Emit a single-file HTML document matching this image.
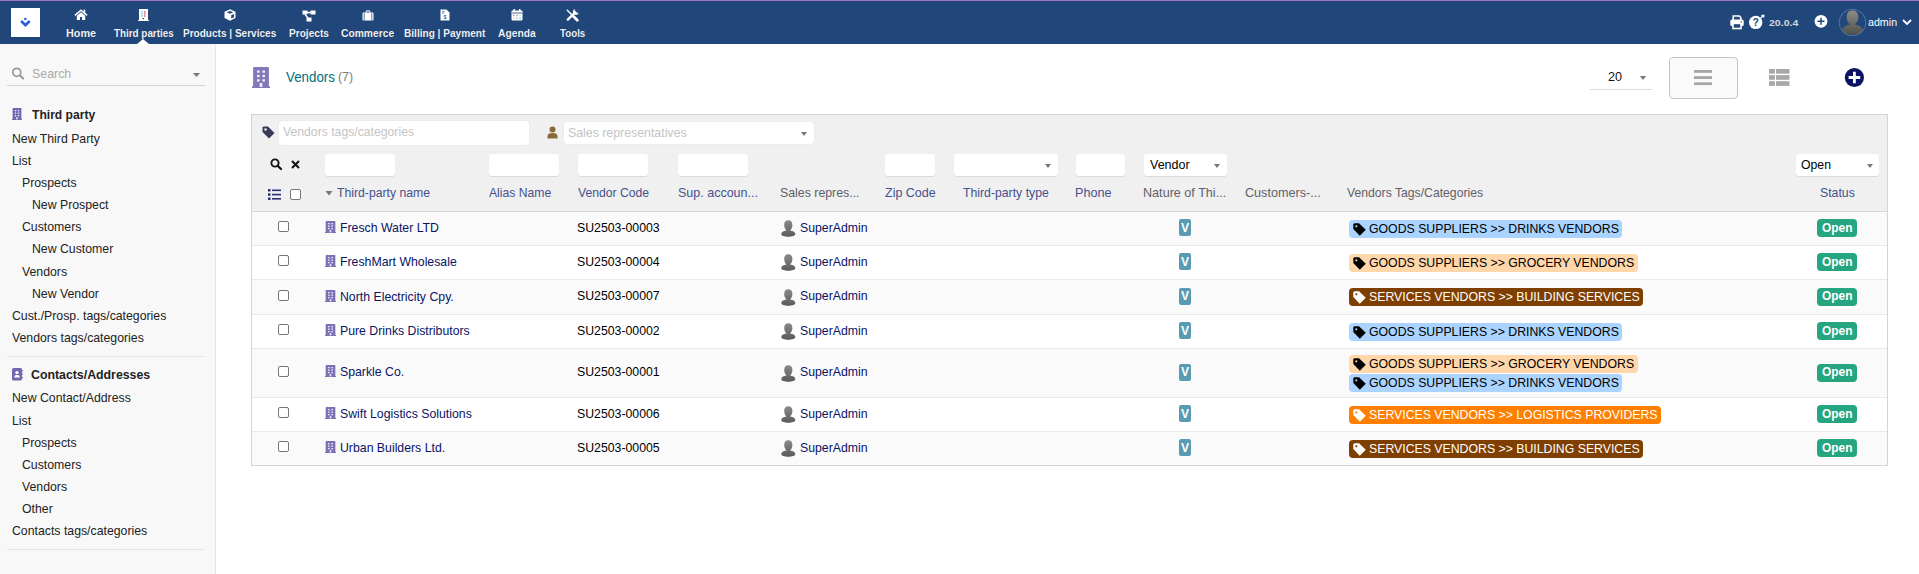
<!DOCTYPE html>
<html><head><meta charset="utf-8"><style>
html,body{margin:0;padding:0;background:#fff;}
#w{position:relative;width:1919px;height:574px;overflow:hidden;background:#fff;font-family:"Liberation Sans",sans-serif;}
.t{position:absolute;white-space:nowrap;line-height:1;transform-origin:0 0;}
.r{position:absolute;}
svg.r{overflow:visible;}
</style></head><body><div id="w">
<div class="r" style="left:0px;top:0px;width:1919px;height:1px;background:#a077bf"></div>
<div class="r" style="left:0px;top:1px;width:1919px;height:43px;background:#21467a"></div>
<div class="r" style="left:11px;top:8px;width:29px;height:29px;background:#fff"></div>
<svg class="r" style="left:19px;top:17px;" width="13" height="11" viewBox="0 0 13 11"><circle cx="6.4" cy="2" r="1.3" fill="#2d5ed8"/><path d="M1.2 4.9 L3 3.1 L6.4 6.2 L9.8 3.1 L11.6 4.9 L6.4 9.9Z" fill="#2d5ed8"/></svg>
<div class="t" style="left:65.51px;top:27.69px;font-size:11px;font-weight:bold;color:#eef0f4;transform:scaleX(0.9831);text-shadow:0 0 1px rgba(0,0,0,.3)">Home</div>
<div class="t" style="left:113.71px;top:27.69px;font-size:11px;font-weight:bold;color:#eef0f4;transform:scaleX(0.8956);text-shadow:0 0 1px rgba(0,0,0,.3)">Third parties</div>
<div class="t" style="left:183.16px;top:27.69px;font-size:11px;font-weight:bold;color:#eef0f4;transform:scaleX(0.9129);text-shadow:0 0 1px rgba(0,0,0,.3)">Products | Services</div>
<div class="t" style="left:288.86px;top:27.69px;font-size:11px;font-weight:bold;color:#eef0f4;transform:scaleX(0.9196);text-shadow:0 0 1px rgba(0,0,0,.3)">Projects</div>
<div class="t" style="left:341.33px;top:27.69px;font-size:11px;font-weight:bold;color:#eef0f4;transform:scaleX(0.9358);text-shadow:0 0 1px rgba(0,0,0,.3)">Commerce</div>
<div class="t" style="left:403.76px;top:27.69px;font-size:11px;font-weight:bold;color:#eef0f4;transform:scaleX(0.9170);text-shadow:0 0 1px rgba(0,0,0,.3)">Billing | Payment</div>
<div class="t" style="left:498.21px;top:27.69px;font-size:11px;font-weight:bold;color:#eef0f4;transform:scaleX(0.9328);text-shadow:0 0 1px rgba(0,0,0,.3)">Agenda</div>
<div class="t" style="left:559.91px;top:27.69px;font-size:11px;font-weight:bold;color:#eef0f4;transform:scaleX(0.8857);text-shadow:0 0 1px rgba(0,0,0,.3)">Tools</div>
<svg class="r" style="left:137px;top:39px;" width="12" height="5" viewBox="0 0 12 5"><path d="M0 5 L6 0 L12 5Z" fill="#fff"/></svg>
<svg class="r" style="left:74px;top:9px;" width="14" height="12" viewBox="0 0 14 12"><path d="M0.9 6.4 L7 1.2 L13.1 6.4" stroke="#fff" stroke-width="1.5" fill="none"/><rect x="9.6" y="0.6" width="1.6" height="3.4" fill="#fff"/><path d="M2.8 6.8 L7 3.3 L11.2 6.8 V11 H8 V8 H6 V11 H2.8Z" fill="#fff"/></svg>
<svg class="r" style="left:138px;top:9px;" width="11" height="12" viewBox="0 0 11 12"><rect x="1" y="0" width="9" height="12" fill="#fff"/><rect x="0" y="11" width="11" height="1" fill="#fff"/><rect x="3.3" y="2.2" width="1.4" height="1.2" fill="#5bc"/><rect x="6.1" y="2.2" width="1.4" height="1.2" fill="#c36"/><rect x="3.3" y="4.3" width="1.4" height="1.2" fill="#5bc"/><rect x="6.1" y="4.3" width="1.4" height="1.2" fill="#c36"/><rect x="3.3" y="6.4" width="1.4" height="1.2" fill="#8b8"/><rect x="6.1" y="6.4" width="1.4" height="1.2" fill="#c36"/><circle cx="5.3" cy="9.6" r="0.8" fill="#33a"/></svg>
<svg class="r" style="left:224px;top:9px;" width="12" height="12" viewBox="0 0 12 12"><path d="M6 0.3 L11.5 2.8 V9 L6 11.7 L0.5 9 V2.8Z" fill="#fff"/><path d="M6 1.9 L9.2 3.3 L6 4.7 L2.8 3.3Z" fill="#21467a"/><path d="M7.2 6.3 L10 5 V8.2 L7.2 9.5Z" fill="#21467a"/></svg>
<svg class="r" style="left:302px;top:10px;" width="14" height="11" viewBox="0 0 14 11"><rect x="0.5" y="0.5" width="5" height="4" fill="#fff"/><rect x="8.5" y="0.5" width="5" height="4" fill="#fff"/><rect x="4.5" y="7.5" width="5" height="4" fill="#fff"/><path d="M5 2.5 H9 M3 4.5 L6 8" stroke="#fff" stroke-width="1.3"/></svg>
<svg class="r" style="left:362px;top:10px;" width="12" height="11" viewBox="0 0 12 11"><rect x="0.5" y="2.6" width="11" height="7.8" rx="1" fill="#fff"/><path d="M4.2 2.8 V0.9 H7.8 V2.8" stroke="#fff" stroke-width="1" fill="none"/><path d="M2.2 3 V10.4 M9.8 3 V10.4" stroke="#21467a" stroke-width="0.7"/></svg>
<svg class="r" style="left:440px;top:9px;" width="10" height="12" viewBox="0 0 10 12"><path d="M0.5 0.5 H6.5 L9.5 3.5 V11.5 H0.5Z" fill="#fff"/><path d="M2 2.5 H4.5 M2 4 H4.5" stroke="#21467a" stroke-width="0.6"/><text x="5" y="10" font-size="5.5" text-anchor="middle" fill="#21467a" font-family="Liberation Sans">$</text></svg>
<svg class="r" style="left:511px;top:9px;" width="12" height="12" viewBox="0 0 12 12"><rect x="0.5" y="1.5" width="11" height="10" rx="1" fill="#fff"/><rect x="2.5" y="0" width="1.5" height="3" fill="#fff"/><rect x="8" y="0" width="1.5" height="3" fill="#fff"/><path d="M1 4 H11" stroke="#21467a" stroke-width="0.8"/><rect x="2" y="5.5" width="1.6" height="1.6" fill="#8af"/><rect x="5.2" y="5.5" width="1.6" height="1.6" fill="#f9a"/><rect x="8.4" y="5.5" width="1.6" height="1.6" fill="#afd"/><rect x="2" y="8.5" width="1.6" height="1.6" fill="#fc8"/><rect x="5.2" y="8.5" width="1.6" height="1.6" fill="#bbf"/><rect x="8.4" y="8.5" width="1.6" height="1.6" fill="#8cf"/></svg>
<svg class="r" style="left:566px;top:9px;" width="13" height="12" viewBox="0 0 13 12"><path d="M1.3 1.3 L6.5 6.5" stroke="#fff" stroke-width="1.5" stroke-linecap="round"/><path d="M7.6 7.6 L11.3 11.3" stroke="#fff" stroke-width="2.8" stroke-linecap="round"/><path d="M1.8 10.6 L8.4 4" stroke="#fff" stroke-width="2.3" stroke-linecap="round"/><circle cx="9.8" cy="2.9" r="2.9" fill="#fff"/><path d="M9.6 -0.4 L13.2 3.2 L11.3 5.1 L7.7 1.5Z" fill="#21467a" transform="translate(0.6 -0.6)"/></svg>
<svg class="r" style="left:1730px;top:15px;" width="14" height="14" viewBox="0 0 14 14"><path d="M3.2 5 V1 H9.3 L10.8 2.5 V5" stroke="#fff" stroke-width="1.6" fill="none"/><rect x="0.3" y="4.6" width="13.4" height="6.4" rx="1.6" fill="#fff"/><rect x="3" y="8.4" width="8" height="5.1" fill="#21467a" stroke="#fff" stroke-width="1.6"/><circle cx="11.3" cy="6.9" r="0.7" fill="#21467a"/></svg>
<svg class="r" style="left:1748px;top:14px;" width="17" height="16" viewBox="0 0 17 16"><circle cx="7.7" cy="8.4" r="6.7" fill="#fff"/><text x="7.7" y="12.3" font-size="10.5" font-weight="bold" text-anchor="middle" fill="#21467a" font-family="Liberation Sans">?</text><path d="M12.6 4.2 L15.6 1.3 M13.4 1.3 H15.8 V3.6" stroke="#fff" stroke-width="1.2" fill="none"/></svg>
<div class="t" style="left:1768.51px;top:17.76px;font-size:9.5px;font-weight:bold;color:#d4d8de;transform:scaleX(1.1082);">20.0.4</div>
<svg class="r" style="left:1814px;top:14px;" width="14" height="14" viewBox="0 0 14 14"><circle cx="7" cy="7.3" r="6.4" fill="#fff"/><path d="M7 3.8 V10.8 M3.5 7.3 H10.5" stroke="#21467a" stroke-width="1.5"/></svg>
<svg class="r" style="left:1838px;top:8px;" width="29" height="29" viewBox="0 0 29 29"><defs><linearGradient id="ga" x1="0" y1="0" x2="0" y2="1"><stop offset="0" stop-color="#8c8c86"/><stop offset="1" stop-color="#50504a"/></linearGradient></defs><path d="M14.5 2.6 C18.4 2.6 20.3 5.3 20.3 9.2 C20.3 12.6 18.8 15 17.3 16.1 L17.3 16.8 C21.8 17.6 24.7 19.2 24.7 22.4 C24.7 25.4 20 26.6 14.5 26.6 C9 26.6 4.3 25.4 4.3 22.4 C4.3 19.2 7.2 17.6 11.7 16.8 L11.7 16.1 C10.2 15 8.7 12.6 8.7 9.2 C8.7 5.3 10.6 2.6 14.5 2.6Z" fill="url(#ga)"/><circle cx="14.5" cy="14.5" r="13.3" fill="none" stroke="#5b7aa6" stroke-width="0.9"/></svg>
<div class="t" style="left:1868.49px;top:17.84px;font-size:10px;color:#fff;transform:scaleX(1.0674);">admin</div>
<svg class="r" style="left:1902px;top:19px;" width="10" height="7" viewBox="0 0 10 7"><path d="M1 1 L5 5 L9 1" stroke="#fff" stroke-width="1.8" fill="none"/></svg>
<div class="r" style="left:0px;top:44px;width:215px;height:530px;background:#f8f8f8"></div>
<div class="r" style="left:215px;top:44px;width:1px;height:530px;background:#e6e6e6"></div>
<svg class="r" style="left:12px;top:67px;" width="14" height="13" viewBox="0 0 14 13"><circle cx="4.8" cy="5.3" r="4" stroke="#999" stroke-width="1.7" fill="none"/><path d="M7.8 8.3 L11.2 11.5" stroke="#999" stroke-width="2.1" stroke-linecap="round"/></svg>
<div class="t" style="left:31.52px;top:67.30px;font-size:13px;color:#aaa;transform:scaleX(0.9524);">Search</div>
<svg class="r" style="left:193px;top:73px;" width="7" height="4" viewBox="0 0 7 4"><path d="M0 0 H7 L3.5 4Z" fill="#777"/></svg>
<div class="r" style="left:7px;top:85px;width:198px;height:1px;background:#d4d4d4"></div>
<svg class="r" style="left:12px;top:108px;" width="10" height="12" viewBox="0 0 10 12"><rect x="0.60" y="0" width="8.80" height="12" rx="0.60" fill="#6f68b2"/><rect x="0" y="11.00" width="10" height="1.00" fill="#6f68b2"/><rect x="2.80" y="2.00" width="1.40" height="1.30" fill="#fff" opacity="0.9"/><rect x="2.80" y="4.50" width="1.40" height="1.30" fill="#fff" opacity="0.9"/><rect x="2.80" y="7.00" width="1.40" height="1.30" fill="#fff" opacity="0.9"/><rect x="5.80" y="2.00" width="1.40" height="1.30" fill="#fff" opacity="0.9"/><rect x="5.80" y="4.50" width="1.40" height="1.30" fill="#fff" opacity="0.9"/><rect x="5.80" y="7.00" width="1.40" height="1.30" fill="#fff" opacity="0.9"/><rect x="4.30" y="9.20" width="1.40" height="2.20" fill="#fff" opacity="0.9"/></svg>
<div class="t" style="left:31.79px;top:108.20px;font-size:13px;font-weight:bold;color:#222;transform:scaleX(0.9303);">Third party</div>
<div class="t" style="left:12.44px;top:132.00px;font-size:13px;color:#222;transform:scaleX(0.945);">New Third Party</div>
<div class="t" style="left:12.44px;top:154.00px;font-size:13px;color:#222;transform:scaleX(0.945);">List</div>
<div class="t" style="left:22.34px;top:176.00px;font-size:13px;color:#222;transform:scaleX(0.945);">Prospects</div>
<div class="t" style="left:32.14px;top:198.00px;font-size:13px;color:#222;transform:scaleX(0.945);">New Prospect</div>
<div class="t" style="left:22.34px;top:220.00px;font-size:13px;color:#222;transform:scaleX(0.945);">Customers</div>
<div class="t" style="left:32.14px;top:242.00px;font-size:13px;color:#222;transform:scaleX(0.945);">New Customer</div>
<div class="t" style="left:22.34px;top:265.00px;font-size:13px;color:#222;transform:scaleX(0.945);">Vendors</div>
<div class="t" style="left:32.14px;top:287.00px;font-size:13px;color:#222;transform:scaleX(0.945);">New Vendor</div>
<div class="t" style="left:11.74px;top:309.00px;font-size:13px;color:#222;transform:scaleX(0.945);">Cust./Prosp. tags/categories</div>
<div class="t" style="left:11.54px;top:331.00px;font-size:13px;color:#222;transform:scaleX(0.945);">Vendors tags/categories</div>
<div class="r" style="left:7px;top:356px;width:198px;height:1px;background:#e4e4e4"></div>
<svg class="r" style="left:12px;top:368px;" width="11" height="13" viewBox="0 0 11 13"><rect x="0" y="0" width="10" height="12.5" rx="1.5" fill="#7069b0"/><rect x="10" y="2" width="0.9" height="1.2" fill="#7069b0"/><rect x="10" y="5.5" width="0.9" height="1.2" fill="#7069b0"/><rect x="10" y="9" width="0.9" height="1.2" fill="#7069b0"/><circle cx="5" cy="4.6" r="1.7" fill="#fff"/><path d="M2.2 9.6 C2.2 7.6 3.4 7 5 7 C6.6 7 7.8 7.6 7.8 9.6Z" fill="#fff"/></svg>
<div class="t" style="left:31.15px;top:368.00px;font-size:13px;font-weight:bold;color:#222;transform:scaleX(0.9480);">Contacts/Addresses</div>
<div class="t" style="left:12.34px;top:391.00px;font-size:13px;color:#222;transform:scaleX(0.945);">New Contact/Address</div>
<div class="t" style="left:12.34px;top:414.00px;font-size:13px;color:#222;transform:scaleX(0.945);">List</div>
<div class="t" style="left:22.24px;top:436.00px;font-size:13px;color:#222;transform:scaleX(0.945);">Prospects</div>
<div class="t" style="left:22.24px;top:458.00px;font-size:13px;color:#222;transform:scaleX(0.945);">Customers</div>
<div class="t" style="left:22.24px;top:480.00px;font-size:13px;color:#222;transform:scaleX(0.945);">Vendors</div>
<div class="t" style="left:22.24px;top:502.00px;font-size:13px;color:#222;transform:scaleX(0.945);">Other</div>
<div class="t" style="left:12.34px;top:524.00px;font-size:13px;color:#222;transform:scaleX(0.945);">Contacts tags/categories</div>
<div class="r" style="left:7px;top:549px;width:198px;height:1px;background:#e4e4e4"></div>
<svg class="r" style="left:252px;top:67px;" width="18" height="21" viewBox="0 0 18 21"><rect x="1.08" y="0" width="15.84" height="21" rx="1.08" fill="#8279b8"/><rect x="0" y="19.25" width="18" height="1.75" fill="#8279b8"/><rect x="5.04" y="3.50" width="2.52" height="2.27" fill="#fff" opacity="0.9"/><rect x="5.04" y="7.88" width="2.52" height="2.27" fill="#fff" opacity="0.9"/><rect x="5.04" y="12.25" width="2.52" height="2.27" fill="#fff" opacity="0.9"/><rect x="10.44" y="3.50" width="2.52" height="2.27" fill="#fff" opacity="0.9"/><rect x="10.44" y="7.88" width="2.52" height="2.27" fill="#fff" opacity="0.9"/><rect x="10.44" y="12.25" width="2.52" height="2.27" fill="#fff" opacity="0.9"/><rect x="7.74" y="16.10" width="2.52" height="3.85" fill="#fff" opacity="0.9"/></svg>
<div class="t" style="left:285.70px;top:70.35px;font-size:14px;color:rgb(0,110,128);transform:scaleX(0.9521);">Vendors</div>
<div class="t" style="left:337.74px;top:71.44px;font-size:12px;color:#7a7a7a;transform:scaleX(1.0307);">(7)</div>
<div class="t" style="left:1608.12px;top:69.60px;font-size:13px;color:#111;transform:scaleX(0.9701);">20</div>
<svg class="r" style="left:1640px;top:76px;" width="6" height="4" viewBox="0 0 6 4"><path d="M0 0 H6 L3 4Z" fill="#777"/></svg>
<div class="r" style="left:1590px;top:89px;width:62px;height:1px;background:#ddd"></div>
<div class="r" style="left:1669px;top:57px;width:69px;height:42px;background:#fafafa;border:1px solid #c4c4c4;border-radius:4px;box-sizing:border-box"></div>
<svg class="r" style="left:1694px;top:70px;" width="18" height="15" viewBox="0 0 18 15"><rect x="0" y="0" width="18" height="2.8" fill="#a6a6a6"/><rect x="0" y="6.2" width="18" height="2.8" fill="#a6a6a6"/><rect x="0" y="12.3" width="18" height="2.8" fill="#a6a6a6"/></svg>
<svg class="r" style="left:1769px;top:69px;" width="21" height="18" viewBox="0 0 21 18"><g fill="#a8a8a8"><rect x="0" y="0" width="5.9" height="4.7"/><rect x="7" y="0" width="13.5" height="4.7"/><rect x="0" y="6.1" width="5.9" height="4.7"/><rect x="7" y="6.1" width="13.5" height="4.7"/><rect x="0" y="12.2" width="5.9" height="4.7"/><rect x="7" y="12.2" width="13.5" height="4.7"/></g></svg>
<svg class="r" style="left:1844px;top:67px;" width="21" height="21" viewBox="0 0 21 21"><circle cx="10.4" cy="10.5" r="9.6" fill="#0a1464"/><path d="M10.4 4.7 V16.3 M4.6 10.5 H16.2" stroke="#fff" stroke-width="2.8"/></svg>
<div class="r" style="left:251px;top:114px;width:1637px;height:98px;background:#f0f0f0"></div>
<div class="r" style="left:251px;top:114px;width:1637px;height:352px;border:1px solid #d4d4d4;box-sizing:border-box"></div>
<svg class="r" style="left:262px;top:126px;" width="13" height="13" viewBox="0 0 13 13"><path d="M0.5 1.5 V6 L7 12.5 L12.5 7 L6 0.5 H1.5Z" fill="#3a3a58"/><circle cx="3.5" cy="3.5" r="1.2" fill="#f0f0f0"/></svg>
<div class="r" style="left:279px;top:121px;width:250px;height:24px;background:#fff;border-radius:3px;box-shadow:0 0 1px #ccc"></div>
<div class="t" style="left:283.30px;top:125.00px;font-size:13px;color:#c4c4c4;transform:scaleX(0.9396);">Vendors tags/categories</div>
<svg class="r" style="left:547px;top:126px;" width="11" height="13" viewBox="0 0 11 13"><circle cx="5.5" cy="3.5" r="3" fill="#8a6a3a"/><path d="M0.5 12.5 V10 Q0.5 7 5.5 7 Q10.5 7 10.5 10 V12.5Z" fill="#8a6a3a"/></svg>
<div class="r" style="left:564px;top:122px;width:250px;height:22px;background:#fff;border-radius:3px;box-shadow:0 0 1px #ccc"></div>
<div class="t" style="left:567.83px;top:125.70px;font-size:13px;color:#c4c4c4;transform:scaleX(0.9484);">Sales representatives</div>
<svg class="r" style="left:801px;top:132px;" width="6" height="4" viewBox="0 0 6 4"><path d="M0 0 H6 L3 4Z" fill="#777"/></svg>
<svg class="r" style="left:270px;top:158px;" width="12" height="12" viewBox="0 0 12 12"><circle cx="5" cy="5" r="3.6" stroke="#111" stroke-width="1.9" fill="none"/><path d="M7.7 7.7 L11 11" stroke="#111" stroke-width="2.2" stroke-linecap="round"/></svg>
<svg class="r" style="left:291px;top:160px;" width="9" height="9" viewBox="0 0 9 9"><path d="M1 1 L8 8 M8 1 L1 8" stroke="#111" stroke-width="2.1"/></svg>
<div class="r" style="left:325px;top:154px;width:70px;height:22px;background:#fff;border-radius:3px;box-shadow:0 1px 1px rgba(0,0,0,0.10)"></div>
<div class="r" style="left:489px;top:154px;width:70px;height:22px;background:#fff;border-radius:3px;box-shadow:0 1px 1px rgba(0,0,0,0.10)"></div>
<div class="r" style="left:578px;top:154px;width:70px;height:22px;background:#fff;border-radius:3px;box-shadow:0 1px 1px rgba(0,0,0,0.10)"></div>
<div class="r" style="left:678px;top:154px;width:70px;height:22px;background:#fff;border-radius:3px;box-shadow:0 1px 1px rgba(0,0,0,0.10)"></div>
<div class="r" style="left:885px;top:154px;width:50px;height:22px;background:#fff;border-radius:3px;box-shadow:0 1px 1px rgba(0,0,0,0.10)"></div>
<div class="r" style="left:1076px;top:154px;width:49px;height:22px;background:#fff;border-radius:3px;box-shadow:0 1px 1px rgba(0,0,0,0.10)"></div>
<div class="r" style="left:954px;top:154px;width:104px;height:22px;background:#fff;border-radius:3px;box-shadow:0 1px 1px rgba(0,0,0,0.10)"></div>
<div class="r" style="left:1144px;top:154px;width:83px;height:22px;background:#fff;border-radius:3px;box-shadow:0 1px 1px rgba(0,0,0,0.10)"></div>
<div class="r" style="left:1796px;top:154px;width:83px;height:22px;background:#fff;border-radius:3px;box-shadow:0 1px 1px rgba(0,0,0,0.10)"></div>
<svg class="r" style="left:1045px;top:164px;" width="6" height="4" viewBox="0 0 6 4"><path d="M0 0 H6 L3 4Z" fill="#777"/></svg>
<svg class="r" style="left:1214px;top:164px;" width="6" height="4" viewBox="0 0 6 4"><path d="M0 0 H6 L3 4Z" fill="#777"/></svg>
<svg class="r" style="left:1867px;top:164px;" width="6" height="4" viewBox="0 0 6 4"><path d="M0 0 H6 L3 4Z" fill="#777"/></svg>
<div class="t" style="left:1149.50px;top:157.70px;font-size:13px;color:#000;transform:scaleX(0.9611);">Vendor</div>
<div class="t" style="left:1800.73px;top:158.40px;font-size:13px;color:#000;transform:scaleX(0.9441);">Open</div>
<svg class="r" style="left:268px;top:189px;" width="13" height="11" viewBox="0 0 13 11"><g fill="#2a2f78"><rect x="0" y="0" width="2.5" height="2.5"/><rect x="4" y="0.5" width="9" height="1.6"/><rect x="0" y="4.3" width="2.5" height="2.5"/><rect x="4" y="4.8" width="9" height="1.6"/><rect x="0" y="8.5" width="2.5" height="2.5"/><rect x="4" y="9" width="9" height="1.6"/></g></svg>
<div class="r" style="left:290px;top:189px;width:11px;height:11px;background:#fff;border:1px solid #777;border-radius:2px;box-sizing:border-box"></div>
<svg class="r" style="left:325px;top:191px;" width="8" height="5" viewBox="0 0 8 5"><path d="M0.5 0 H7.5 L4 4.5Z" fill="#777"/></svg>
<div class="t" style="left:336.51px;top:186.00px;font-size:13px;color:rgb(70,80,140);transform:scaleX(0.9390);">Third-party name</div>
<div class="t" style="left:489.30px;top:186.00px;font-size:13px;color:rgb(70,80,140);transform:scaleX(0.9363);">Alias Name</div>
<div class="t" style="left:577.70px;top:186.00px;font-size:13px;color:rgb(70,80,140);transform:scaleX(0.9363);">Vendor Code</div>
<div class="t" style="left:677.82px;top:186.00px;font-size:13px;color:rgb(70,80,140);transform:scaleX(0.9620);">Sup. accoun...</div>
<div class="t" style="left:779.53px;top:186.00px;font-size:13px;color:rgb(96,96,104);transform:scaleX(0.9489);">Sales repres...</div>
<div class="t" style="left:884.62px;top:186.00px;font-size:13px;color:rgb(70,80,140);transform:scaleX(0.9614);">Zip Code</div>
<div class="t" style="left:963.01px;top:186.00px;font-size:13px;color:rgb(70,80,140);transform:scaleX(0.9424);">Third-party type</div>
<div class="t" style="left:1075.43px;top:186.00px;font-size:13px;color:rgb(70,80,140);transform:scaleX(0.9695);">Phone</div>
<div class="t" style="left:1142.83px;top:186.00px;font-size:13px;color:rgb(96,96,104);transform:scaleX(0.9701);">Nature of Thi...</div>
<div class="t" style="left:1244.92px;top:186.00px;font-size:13px;color:rgb(96,96,104);transform:scaleX(0.9699);">Customers-...</div>
<div class="t" style="left:1347.30px;top:186.00px;font-size:13px;color:rgb(96,96,104);transform:scaleX(0.9385);">Vendors Tags/Categories</div>
<div class="t" style="left:1819.73px;top:186.00px;font-size:13px;color:rgb(70,80,140);transform:scaleX(0.9444);">Status</div>
<div class="r" style="left:251px;top:211px;width:1637px;height:1px;background:#d8d8d8"></div>
<div class="r" style="left:252px;top:212px;width:1635px;height:33px;background:#fafafa"></div>
<div class="r" style="left:252px;top:246px;width:1635px;height:33px;background:#fff"></div>
<div class="r" style="left:252px;top:280px;width:1635px;height:34px;background:#fafafa"></div>
<div class="r" style="left:252px;top:315px;width:1635px;height:33px;background:#fff"></div>
<div class="r" style="left:252px;top:349px;width:1635px;height:48px;background:#fafafa"></div>
<div class="r" style="left:252px;top:398px;width:1635px;height:33px;background:#fff"></div>
<div class="r" style="left:252px;top:432px;width:1635px;height:33px;background:#fafafa"></div>
<div class="r" style="left:252px;top:245px;width:1635px;height:1px;background:#e9e9e9"></div>
<div class="r" style="left:252px;top:279px;width:1635px;height:1px;background:#e9e9e9"></div>
<div class="r" style="left:252px;top:314px;width:1635px;height:1px;background:#e9e9e9"></div>
<div class="r" style="left:252px;top:348px;width:1635px;height:1px;background:#e9e9e9"></div>
<div class="r" style="left:252px;top:397px;width:1635px;height:1px;background:#e9e9e9"></div>
<div class="r" style="left:252px;top:431px;width:1635px;height:1px;background:#e9e9e9"></div>
<div class="r" style="left:278px;top:221px;width:11px;height:11px;background:#fff;border:1px solid #767676;border-radius:2px;box-sizing:border-box"></div>
<svg class="r" style="left:325px;top:221px;" width="11" height="12" viewBox="0 0 11 12"><rect x="0.66" y="0" width="9.68" height="12" rx="0.66" fill="#7a72b4"/><rect x="0" y="11.00" width="11" height="1.00" fill="#7a72b4"/><rect x="3.08" y="2.00" width="1.54" height="1.30" fill="#fff" opacity="0.9"/><rect x="3.08" y="4.50" width="1.54" height="1.30" fill="#fff" opacity="0.9"/><rect x="3.08" y="7.00" width="1.54" height="1.30" fill="#fff" opacity="0.9"/><rect x="6.38" y="2.00" width="1.54" height="1.30" fill="#fff" opacity="0.9"/><rect x="6.38" y="4.50" width="1.54" height="1.30" fill="#fff" opacity="0.9"/><rect x="6.38" y="7.00" width="1.54" height="1.30" fill="#fff" opacity="0.9"/><rect x="4.73" y="9.20" width="1.54" height="2.20" fill="#fff" opacity="0.9"/></svg>
<div class="t" style="left:339.54px;top:221.00px;font-size:13px;color:#0a1464;transform:scaleX(0.945);">Fresch Water LTD</div>
<div class="t" style="left:577.44px;top:221.00px;font-size:13px;color:#000;transform:scaleX(0.945);">SU2503-00003</div>
<svg class="r" style="left:781px;top:220px;" width="15" height="17" viewBox="0 0 15 17"><defs><linearGradient id="g0" x1="0" y1="0" x2="0" y2="1"><stop offset="0" stop-color="#8a8a88"/><stop offset="1" stop-color="#5a5a58"/></linearGradient></defs><path d="M7.3 0.3 C10 0.3 11.4 2.2 11.4 5 C11.4 7.6 10.2 9.4 9.2 10.2 L9.2 10.6 C12.5 11.2 14.3 12.2 14.3 14 C14.3 16 11 16.7 7.3 16.7 C3.6 16.7 0.3 16 0.3 14 C0.3 12.2 2.1 11.2 5.4 10.6 L5.4 10.2 C4.4 9.4 3.2 7.6 3.2 5 C3.2 2.2 4.6 0.3 7.3 0.3Z" fill="url(#g0)"/></svg>
<div class="t" style="left:800.24px;top:221.00px;font-size:13px;color:#0a1464;transform:scaleX(0.945);">SuperAdmin</div>
<div class="r" style="left:1179px;top:219px;width:12px;height:17px;background:#5a9bb4;border-radius:2px"></div>
<div class="t" style="left:1181.20px;top:221.84px;font-size:12px;font-weight:bold;color:#fff;transform:scaleX(1.0046);">V</div>
<div class="r" style="left:1349px;top:220px;width:273px;height:18px;background:#aad4ff;border-radius:4px"></div>
<svg class="r" style="left:1353px;top:223px;" width="13" height="13" viewBox="0 0 13 13"><path d="M0.3 1.3 V6 L6.8 12.8 L12.8 6.8 L6 0.3 H1.3Z" fill="#000"/><circle cx="3.3" cy="3.3" r="1.1" fill="#aad4ff"/></svg>
<div class="t" style="left:1368.64px;top:222.00px;font-size:13px;color:#000;transform:scaleX(0.945);">GOODS SUPPLIERS >> DRINKS VENDORS</div>
<div class="r" style="left:1817px;top:219px;width:40px;height:18px;background:#25a580;border-radius:4px"></div>
<div class="t" style="left:1822.27px;top:221.84px;font-size:12px;font-weight:bold;color:#fff;transform:scaleX(0.9911);">Open</div>
<div class="r" style="left:278px;top:255px;width:11px;height:11px;background:#fff;border:1px solid #767676;border-radius:2px;box-sizing:border-box"></div>
<svg class="r" style="left:325px;top:255px;" width="11" height="12" viewBox="0 0 11 12"><rect x="0.66" y="0" width="9.68" height="12" rx="0.66" fill="#7a72b4"/><rect x="0" y="11.00" width="11" height="1.00" fill="#7a72b4"/><rect x="3.08" y="2.00" width="1.54" height="1.30" fill="#fff" opacity="0.9"/><rect x="3.08" y="4.50" width="1.54" height="1.30" fill="#fff" opacity="0.9"/><rect x="3.08" y="7.00" width="1.54" height="1.30" fill="#fff" opacity="0.9"/><rect x="6.38" y="2.00" width="1.54" height="1.30" fill="#fff" opacity="0.9"/><rect x="6.38" y="4.50" width="1.54" height="1.30" fill="#fff" opacity="0.9"/><rect x="6.38" y="7.00" width="1.54" height="1.30" fill="#fff" opacity="0.9"/><rect x="4.73" y="9.20" width="1.54" height="2.20" fill="#fff" opacity="0.9"/></svg>
<div class="t" style="left:339.54px;top:255.00px;font-size:13px;color:#0a1464;transform:scaleX(0.945);">FreshMart Wholesale</div>
<div class="t" style="left:577.44px;top:255.00px;font-size:13px;color:#000;transform:scaleX(0.945);">SU2503-00004</div>
<svg class="r" style="left:781px;top:254px;" width="15" height="17" viewBox="0 0 15 17"><defs><linearGradient id="g1" x1="0" y1="0" x2="0" y2="1"><stop offset="0" stop-color="#8a8a88"/><stop offset="1" stop-color="#5a5a58"/></linearGradient></defs><path d="M7.3 0.3 C10 0.3 11.4 2.2 11.4 5 C11.4 7.6 10.2 9.4 9.2 10.2 L9.2 10.6 C12.5 11.2 14.3 12.2 14.3 14 C14.3 16 11 16.7 7.3 16.7 C3.6 16.7 0.3 16 0.3 14 C0.3 12.2 2.1 11.2 5.4 10.6 L5.4 10.2 C4.4 9.4 3.2 7.6 3.2 5 C3.2 2.2 4.6 0.3 7.3 0.3Z" fill="url(#g1)"/></svg>
<div class="t" style="left:800.24px;top:255.00px;font-size:13px;color:#0a1464;transform:scaleX(0.945);">SuperAdmin</div>
<div class="r" style="left:1179px;top:253px;width:12px;height:17px;background:#5a9bb4;border-radius:2px"></div>
<div class="t" style="left:1181.20px;top:255.84px;font-size:12px;font-weight:bold;color:#fff;transform:scaleX(1.0046);">V</div>
<div class="r" style="left:1349px;top:254px;width:289px;height:18px;background:#ffd7aa;border-radius:4px"></div>
<svg class="r" style="left:1353px;top:257px;" width="13" height="13" viewBox="0 0 13 13"><path d="M0.3 1.3 V6 L6.8 12.8 L12.8 6.8 L6 0.3 H1.3Z" fill="#000"/><circle cx="3.3" cy="3.3" r="1.1" fill="#ffd7aa"/></svg>
<div class="t" style="left:1368.64px;top:256.00px;font-size:13px;color:#000;transform:scaleX(0.945);">GOODS SUPPLIERS >> GROCERY VENDORS</div>
<div class="r" style="left:1817px;top:253px;width:40px;height:18px;background:#25a580;border-radius:4px"></div>
<div class="t" style="left:1822.27px;top:255.84px;font-size:12px;font-weight:bold;color:#fff;transform:scaleX(0.9911);">Open</div>
<div class="r" style="left:278px;top:290px;width:11px;height:11px;background:#fff;border:1px solid #767676;border-radius:2px;box-sizing:border-box"></div>
<svg class="r" style="left:325px;top:290px;" width="11" height="12" viewBox="0 0 11 12"><rect x="0.66" y="0" width="9.68" height="12" rx="0.66" fill="#7a72b4"/><rect x="0" y="11.00" width="11" height="1.00" fill="#7a72b4"/><rect x="3.08" y="2.00" width="1.54" height="1.30" fill="#fff" opacity="0.9"/><rect x="3.08" y="4.50" width="1.54" height="1.30" fill="#fff" opacity="0.9"/><rect x="3.08" y="7.00" width="1.54" height="1.30" fill="#fff" opacity="0.9"/><rect x="6.38" y="2.00" width="1.54" height="1.30" fill="#fff" opacity="0.9"/><rect x="6.38" y="4.50" width="1.54" height="1.30" fill="#fff" opacity="0.9"/><rect x="6.38" y="7.00" width="1.54" height="1.30" fill="#fff" opacity="0.9"/><rect x="4.73" y="9.20" width="1.54" height="2.20" fill="#fff" opacity="0.9"/></svg>
<div class="t" style="left:339.54px;top:290.00px;font-size:13px;color:#0a1464;transform:scaleX(0.945);">North Electricity Cpy.</div>
<div class="t" style="left:577.44px;top:289.00px;font-size:13px;color:#000;transform:scaleX(0.945);">SU2503-00007</div>
<svg class="r" style="left:781px;top:289px;" width="15" height="17" viewBox="0 0 15 17"><defs><linearGradient id="g2" x1="0" y1="0" x2="0" y2="1"><stop offset="0" stop-color="#8a8a88"/><stop offset="1" stop-color="#5a5a58"/></linearGradient></defs><path d="M7.3 0.3 C10 0.3 11.4 2.2 11.4 5 C11.4 7.6 10.2 9.4 9.2 10.2 L9.2 10.6 C12.5 11.2 14.3 12.2 14.3 14 C14.3 16 11 16.7 7.3 16.7 C3.6 16.7 0.3 16 0.3 14 C0.3 12.2 2.1 11.2 5.4 10.6 L5.4 10.2 C4.4 9.4 3.2 7.6 3.2 5 C3.2 2.2 4.6 0.3 7.3 0.3Z" fill="url(#g2)"/></svg>
<div class="t" style="left:800.24px;top:289.00px;font-size:13px;color:#0a1464;transform:scaleX(0.945);">SuperAdmin</div>
<div class="r" style="left:1179px;top:288px;width:12px;height:17px;background:#5a9bb4;border-radius:2px"></div>
<div class="t" style="left:1181.20px;top:289.84px;font-size:12px;font-weight:bold;color:#fff;transform:scaleX(1.0046);">V</div>
<div class="r" style="left:1349px;top:288px;width:294px;height:18px;background:#7f3f00;border-radius:4px"></div>
<svg class="r" style="left:1353px;top:291px;" width="13" height="13" viewBox="0 0 13 13"><path d="M0.3 1.3 V6 L6.8 12.8 L12.8 6.8 L6 0.3 H1.3Z" fill="#fff"/><circle cx="3.3" cy="3.3" r="1.1" fill="#7f3f00"/></svg>
<div class="t" style="left:1368.64px;top:290.00px;font-size:13px;color:#fff;transform:scaleX(0.945);">SERVICES VENDORS >> BUILDING SERVICES</div>
<div class="r" style="left:1817px;top:288px;width:40px;height:18px;background:#25a580;border-radius:4px"></div>
<div class="t" style="left:1822.27px;top:289.84px;font-size:12px;font-weight:bold;color:#fff;transform:scaleX(0.9911);">Open</div>
<div class="r" style="left:278px;top:324px;width:11px;height:11px;background:#fff;border:1px solid #767676;border-radius:2px;box-sizing:border-box"></div>
<svg class="r" style="left:325px;top:324px;" width="11" height="12" viewBox="0 0 11 12"><rect x="0.66" y="0" width="9.68" height="12" rx="0.66" fill="#7a72b4"/><rect x="0" y="11.00" width="11" height="1.00" fill="#7a72b4"/><rect x="3.08" y="2.00" width="1.54" height="1.30" fill="#fff" opacity="0.9"/><rect x="3.08" y="4.50" width="1.54" height="1.30" fill="#fff" opacity="0.9"/><rect x="3.08" y="7.00" width="1.54" height="1.30" fill="#fff" opacity="0.9"/><rect x="6.38" y="2.00" width="1.54" height="1.30" fill="#fff" opacity="0.9"/><rect x="6.38" y="4.50" width="1.54" height="1.30" fill="#fff" opacity="0.9"/><rect x="6.38" y="7.00" width="1.54" height="1.30" fill="#fff" opacity="0.9"/><rect x="4.73" y="9.20" width="1.54" height="2.20" fill="#fff" opacity="0.9"/></svg>
<div class="t" style="left:339.54px;top:324.00px;font-size:13px;color:#0a1464;transform:scaleX(0.945);">Pure Drinks Distributors</div>
<div class="t" style="left:577.44px;top:324.00px;font-size:13px;color:#000;transform:scaleX(0.945);">SU2503-00002</div>
<svg class="r" style="left:781px;top:323px;" width="15" height="17" viewBox="0 0 15 17"><defs><linearGradient id="g3" x1="0" y1="0" x2="0" y2="1"><stop offset="0" stop-color="#8a8a88"/><stop offset="1" stop-color="#5a5a58"/></linearGradient></defs><path d="M7.3 0.3 C10 0.3 11.4 2.2 11.4 5 C11.4 7.6 10.2 9.4 9.2 10.2 L9.2 10.6 C12.5 11.2 14.3 12.2 14.3 14 C14.3 16 11 16.7 7.3 16.7 C3.6 16.7 0.3 16 0.3 14 C0.3 12.2 2.1 11.2 5.4 10.6 L5.4 10.2 C4.4 9.4 3.2 7.6 3.2 5 C3.2 2.2 4.6 0.3 7.3 0.3Z" fill="url(#g3)"/></svg>
<div class="t" style="left:800.24px;top:324.00px;font-size:13px;color:#0a1464;transform:scaleX(0.945);">SuperAdmin</div>
<div class="r" style="left:1179px;top:322px;width:12px;height:17px;background:#5a9bb4;border-radius:2px"></div>
<div class="t" style="left:1181.20px;top:324.84px;font-size:12px;font-weight:bold;color:#fff;transform:scaleX(1.0046);">V</div>
<div class="r" style="left:1349px;top:323px;width:273px;height:18px;background:#aad4ff;border-radius:4px"></div>
<svg class="r" style="left:1353px;top:326px;" width="13" height="13" viewBox="0 0 13 13"><path d="M0.3 1.3 V6 L6.8 12.8 L12.8 6.8 L6 0.3 H1.3Z" fill="#000"/><circle cx="3.3" cy="3.3" r="1.1" fill="#aad4ff"/></svg>
<div class="t" style="left:1368.64px;top:325.00px;font-size:13px;color:#000;transform:scaleX(0.945);">GOODS SUPPLIERS >> DRINKS VENDORS</div>
<div class="r" style="left:1817px;top:322px;width:40px;height:18px;background:#25a580;border-radius:4px"></div>
<div class="t" style="left:1822.27px;top:324.84px;font-size:12px;font-weight:bold;color:#fff;transform:scaleX(0.9911);">Open</div>
<div class="r" style="left:278px;top:366px;width:11px;height:11px;background:#fff;border:1px solid #767676;border-radius:2px;box-sizing:border-box"></div>
<svg class="r" style="left:325px;top:365px;" width="11" height="12" viewBox="0 0 11 12"><rect x="0.66" y="0" width="9.68" height="12" rx="0.66" fill="#7a72b4"/><rect x="0" y="11.00" width="11" height="1.00" fill="#7a72b4"/><rect x="3.08" y="2.00" width="1.54" height="1.30" fill="#fff" opacity="0.9"/><rect x="3.08" y="4.50" width="1.54" height="1.30" fill="#fff" opacity="0.9"/><rect x="3.08" y="7.00" width="1.54" height="1.30" fill="#fff" opacity="0.9"/><rect x="6.38" y="2.00" width="1.54" height="1.30" fill="#fff" opacity="0.9"/><rect x="6.38" y="4.50" width="1.54" height="1.30" fill="#fff" opacity="0.9"/><rect x="6.38" y="7.00" width="1.54" height="1.30" fill="#fff" opacity="0.9"/><rect x="4.73" y="9.20" width="1.54" height="2.20" fill="#fff" opacity="0.9"/></svg>
<div class="t" style="left:339.54px;top:365.00px;font-size:13px;color:#0a1464;transform:scaleX(0.945);">Sparkle Co.</div>
<div class="t" style="left:577.44px;top:365.00px;font-size:13px;color:#000;transform:scaleX(0.945);">SU2503-00001</div>
<svg class="r" style="left:781px;top:365px;" width="15" height="17" viewBox="0 0 15 17"><defs><linearGradient id="g4" x1="0" y1="0" x2="0" y2="1"><stop offset="0" stop-color="#8a8a88"/><stop offset="1" stop-color="#5a5a58"/></linearGradient></defs><path d="M7.3 0.3 C10 0.3 11.4 2.2 11.4 5 C11.4 7.6 10.2 9.4 9.2 10.2 L9.2 10.6 C12.5 11.2 14.3 12.2 14.3 14 C14.3 16 11 16.7 7.3 16.7 C3.6 16.7 0.3 16 0.3 14 C0.3 12.2 2.1 11.2 5.4 10.6 L5.4 10.2 C4.4 9.4 3.2 7.6 3.2 5 C3.2 2.2 4.6 0.3 7.3 0.3Z" fill="url(#g4)"/></svg>
<div class="t" style="left:800.24px;top:365.00px;font-size:13px;color:#0a1464;transform:scaleX(0.945);">SuperAdmin</div>
<div class="r" style="left:1179px;top:364px;width:12px;height:17px;background:#5a9bb4;border-radius:2px"></div>
<div class="t" style="left:1181.20px;top:365.84px;font-size:12px;font-weight:bold;color:#fff;transform:scaleX(1.0046);">V</div>
<div class="r" style="left:1349px;top:355px;width:289px;height:18px;background:#ffd7aa;border-radius:4px"></div>
<svg class="r" style="left:1353px;top:358px;" width="13" height="13" viewBox="0 0 13 13"><path d="M0.3 1.3 V6 L6.8 12.8 L12.8 6.8 L6 0.3 H1.3Z" fill="#000"/><circle cx="3.3" cy="3.3" r="1.1" fill="#ffd7aa"/></svg>
<div class="t" style="left:1368.64px;top:357.00px;font-size:13px;color:#000;transform:scaleX(0.945);">GOODS SUPPLIERS >> GROCERY VENDORS</div>
<div class="r" style="left:1349px;top:374px;width:273px;height:18px;background:#aad4ff;border-radius:4px"></div>
<svg class="r" style="left:1353px;top:377px;" width="13" height="13" viewBox="0 0 13 13"><path d="M0.3 1.3 V6 L6.8 12.8 L12.8 6.8 L6 0.3 H1.3Z" fill="#000"/><circle cx="3.3" cy="3.3" r="1.1" fill="#aad4ff"/></svg>
<div class="t" style="left:1368.64px;top:376.00px;font-size:13px;color:#000;transform:scaleX(0.945);">GOODS SUPPLIERS >> DRINKS VENDORS</div>
<div class="r" style="left:1817px;top:364px;width:40px;height:18px;background:#25a580;border-radius:4px"></div>
<div class="t" style="left:1822.27px;top:365.84px;font-size:12px;font-weight:bold;color:#fff;transform:scaleX(0.9911);">Open</div>
<div class="r" style="left:278px;top:407px;width:11px;height:11px;background:#fff;border:1px solid #767676;border-radius:2px;box-sizing:border-box"></div>
<svg class="r" style="left:325px;top:407px;" width="11" height="12" viewBox="0 0 11 12"><rect x="0.66" y="0" width="9.68" height="12" rx="0.66" fill="#7a72b4"/><rect x="0" y="11.00" width="11" height="1.00" fill="#7a72b4"/><rect x="3.08" y="2.00" width="1.54" height="1.30" fill="#fff" opacity="0.9"/><rect x="3.08" y="4.50" width="1.54" height="1.30" fill="#fff" opacity="0.9"/><rect x="3.08" y="7.00" width="1.54" height="1.30" fill="#fff" opacity="0.9"/><rect x="6.38" y="2.00" width="1.54" height="1.30" fill="#fff" opacity="0.9"/><rect x="6.38" y="4.50" width="1.54" height="1.30" fill="#fff" opacity="0.9"/><rect x="6.38" y="7.00" width="1.54" height="1.30" fill="#fff" opacity="0.9"/><rect x="4.73" y="9.20" width="1.54" height="2.20" fill="#fff" opacity="0.9"/></svg>
<div class="t" style="left:339.54px;top:407.00px;font-size:13px;color:#0a1464;transform:scaleX(0.945);">Swift Logistics Solutions</div>
<div class="t" style="left:577.44px;top:407.00px;font-size:13px;color:#000;transform:scaleX(0.945);">SU2503-00006</div>
<svg class="r" style="left:781px;top:406px;" width="15" height="17" viewBox="0 0 15 17"><defs><linearGradient id="g5" x1="0" y1="0" x2="0" y2="1"><stop offset="0" stop-color="#8a8a88"/><stop offset="1" stop-color="#5a5a58"/></linearGradient></defs><path d="M7.3 0.3 C10 0.3 11.4 2.2 11.4 5 C11.4 7.6 10.2 9.4 9.2 10.2 L9.2 10.6 C12.5 11.2 14.3 12.2 14.3 14 C14.3 16 11 16.7 7.3 16.7 C3.6 16.7 0.3 16 0.3 14 C0.3 12.2 2.1 11.2 5.4 10.6 L5.4 10.2 C4.4 9.4 3.2 7.6 3.2 5 C3.2 2.2 4.6 0.3 7.3 0.3Z" fill="url(#g5)"/></svg>
<div class="t" style="left:800.24px;top:407.00px;font-size:13px;color:#0a1464;transform:scaleX(0.945);">SuperAdmin</div>
<div class="r" style="left:1179px;top:405px;width:12px;height:17px;background:#5a9bb4;border-radius:2px"></div>
<div class="t" style="left:1181.20px;top:407.84px;font-size:12px;font-weight:bold;color:#fff;transform:scaleX(1.0046);">V</div>
<div class="r" style="left:1349px;top:406px;width:312px;height:18px;background:#ff7f00;border-radius:4px"></div>
<svg class="r" style="left:1353px;top:409px;" width="13" height="13" viewBox="0 0 13 13"><path d="M0.3 1.3 V6 L6.8 12.8 L12.8 6.8 L6 0.3 H1.3Z" fill="#fff"/><circle cx="3.3" cy="3.3" r="1.1" fill="#ff7f00"/></svg>
<div class="t" style="left:1368.64px;top:408.00px;font-size:13px;color:#fff;transform:scaleX(0.945);">SERVICES VENDORS >> LOGISTICS PROVIDERS</div>
<div class="r" style="left:1817px;top:405px;width:40px;height:18px;background:#25a580;border-radius:4px"></div>
<div class="t" style="left:1822.27px;top:407.84px;font-size:12px;font-weight:bold;color:#fff;transform:scaleX(0.9911);">Open</div>
<div class="r" style="left:278px;top:441px;width:11px;height:11px;background:#fff;border:1px solid #767676;border-radius:2px;box-sizing:border-box"></div>
<svg class="r" style="left:325px;top:441px;" width="11" height="12" viewBox="0 0 11 12"><rect x="0.66" y="0" width="9.68" height="12" rx="0.66" fill="#7a72b4"/><rect x="0" y="11.00" width="11" height="1.00" fill="#7a72b4"/><rect x="3.08" y="2.00" width="1.54" height="1.30" fill="#fff" opacity="0.9"/><rect x="3.08" y="4.50" width="1.54" height="1.30" fill="#fff" opacity="0.9"/><rect x="3.08" y="7.00" width="1.54" height="1.30" fill="#fff" opacity="0.9"/><rect x="6.38" y="2.00" width="1.54" height="1.30" fill="#fff" opacity="0.9"/><rect x="6.38" y="4.50" width="1.54" height="1.30" fill="#fff" opacity="0.9"/><rect x="6.38" y="7.00" width="1.54" height="1.30" fill="#fff" opacity="0.9"/><rect x="4.73" y="9.20" width="1.54" height="2.20" fill="#fff" opacity="0.9"/></svg>
<div class="t" style="left:339.54px;top:441.00px;font-size:13px;color:#0a1464;transform:scaleX(0.945);">Urban Builders Ltd.</div>
<div class="t" style="left:577.44px;top:441.00px;font-size:13px;color:#000;transform:scaleX(0.945);">SU2503-00005</div>
<svg class="r" style="left:781px;top:440px;" width="15" height="17" viewBox="0 0 15 17"><defs><linearGradient id="g6" x1="0" y1="0" x2="0" y2="1"><stop offset="0" stop-color="#8a8a88"/><stop offset="1" stop-color="#5a5a58"/></linearGradient></defs><path d="M7.3 0.3 C10 0.3 11.4 2.2 11.4 5 C11.4 7.6 10.2 9.4 9.2 10.2 L9.2 10.6 C12.5 11.2 14.3 12.2 14.3 14 C14.3 16 11 16.7 7.3 16.7 C3.6 16.7 0.3 16 0.3 14 C0.3 12.2 2.1 11.2 5.4 10.6 L5.4 10.2 C4.4 9.4 3.2 7.6 3.2 5 C3.2 2.2 4.6 0.3 7.3 0.3Z" fill="url(#g6)"/></svg>
<div class="t" style="left:800.24px;top:441.00px;font-size:13px;color:#0a1464;transform:scaleX(0.945);">SuperAdmin</div>
<div class="r" style="left:1179px;top:439px;width:12px;height:17px;background:#5a9bb4;border-radius:2px"></div>
<div class="t" style="left:1181.20px;top:441.84px;font-size:12px;font-weight:bold;color:#fff;transform:scaleX(1.0046);">V</div>
<div class="r" style="left:1349px;top:440px;width:294px;height:18px;background:#7f3f00;border-radius:4px"></div>
<svg class="r" style="left:1353px;top:443px;" width="13" height="13" viewBox="0 0 13 13"><path d="M0.3 1.3 V6 L6.8 12.8 L12.8 6.8 L6 0.3 H1.3Z" fill="#fff"/><circle cx="3.3" cy="3.3" r="1.1" fill="#7f3f00"/></svg>
<div class="t" style="left:1368.64px;top:442.00px;font-size:13px;color:#fff;transform:scaleX(0.945);">SERVICES VENDORS >> BUILDING SERVICES</div>
<div class="r" style="left:1817px;top:439px;width:40px;height:18px;background:#25a580;border-radius:4px"></div>
<div class="t" style="left:1822.27px;top:441.84px;font-size:12px;font-weight:bold;color:#fff;transform:scaleX(0.9911);">Open</div>
</div></body></html>
